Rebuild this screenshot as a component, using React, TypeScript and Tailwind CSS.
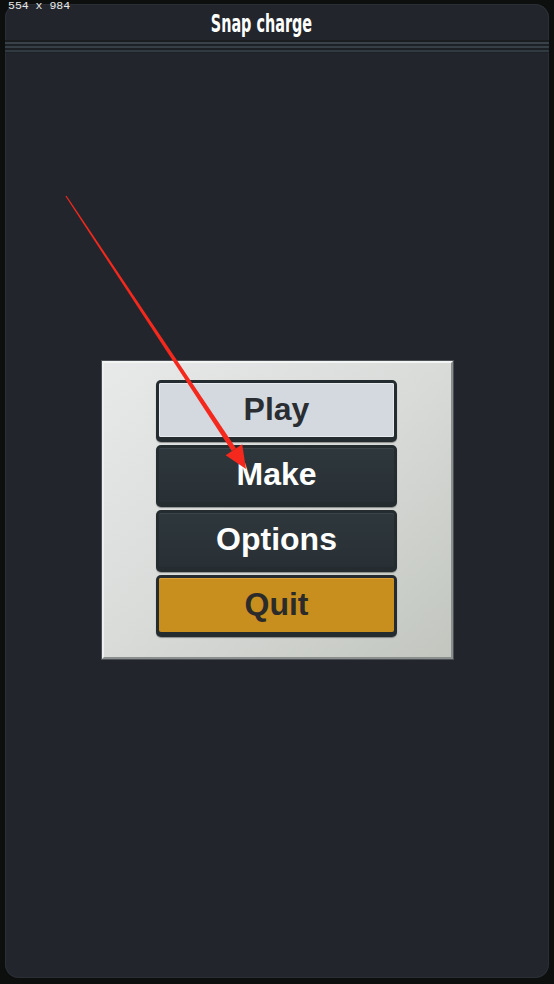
import React from "react";

function MenuButton({ label, variant }: { label: string; variant: "light" | "dark" | "gold" }) {
  const face =
    variant === "light"
      ? "bg-[#d3d9df] text-[#2a2e33] shadow-[inset_0_0_0_1px_#e6eaee]"
      : variant === "gold"
      ? "bg-[#c98f1e] text-[#2b2b2b] shadow-[inset_0_1px_0_#d9a23a]"
      : "bg-gradient-to-b from-[#2e373c] to-[#283035] text-white shadow-[inset_0_1px_0_#3a444a]";
  return (
    <div className="h-[62px] w-[241px] rounded-[5px] bg-[#252c30] px-[3px] pt-[3px] pb-[5px] shadow-[0_1px_1px_rgba(0,0,0,0.35)]">
      <div
        className={`flex h-full w-full items-center justify-center rounded-[2px] pb-[3px] text-[32px] font-bold leading-none ${face}`}
        style={{ fontFamily: '"Liberation Sans", Arial, sans-serif' }}
      >
        {label}
      </div>
    </div>
  );
}

export default function App() {
  return (
    <div className="relative h-[984px] w-[554px] overflow-hidden bg-[#0d0f0f]">
      <div className="flex h-full w-full flex-col px-[5px] pt-[4px] pb-[6px]">
        <div className="flex flex-1 flex-col overflow-hidden rounded-[14px] bg-[#22262c] shadow-[inset_0_0_0_1px_#2a2f35]">
          <div className="flex h-[36px] items-center justify-center pr-[32px] pt-[4px]">
            <span
              className="inline-block scale-x-[0.6] text-[24px] font-bold leading-none text-white"
              style={{ fontFamily: '"DejaVu Sans", sans-serif' }}
            >
              Snap charge
            </span>
          </div>
          <div className="flex h-[13px] flex-col">
            <div className="h-[2px] bg-[#1a1e21]" />
            <div className="h-[2px] bg-[#39424a]" />
            <div className="h-[2px] bg-[#1c2024]" />
            <div className="h-[2px] bg-[#363f46]" />
            <div className="h-[2px] bg-[#1c2024]" />
            <div className="h-[2px] bg-[#323a41]" />
            <div className="h-[1px] bg-[#1e2227]" />
          </div>
          <div className="flex flex-1 flex-col pl-[97px] pt-[308px]">
            <div className="flex h-[298px] w-[351px] flex-col items-center border-[2px] border-t-[#f3f4f4] border-l-[#eef0f0] border-r-[#8a8e8c] border-b-[#8a8e8c] bg-gradient-to-br from-[#e8eaea] via-[#d8dbd8] to-[#c2c6bf] pt-[17px] pr-[2px] shadow-[0_0_0_1px_#4a5054]">
              <div className="flex flex-col gap-[3px]">
                <MenuButton label="Play" variant="light" />
                <MenuButton label="Make" variant="dark" />
                <MenuButton label="Options" variant="dark" />
                <MenuButton label="Quit" variant="gold" />
              </div>
            </div>
          </div>
        </div>
      </div>

      <div
        className="absolute left-[8px] top-0 text-[11.5px] leading-[11px] text-[#e8e8e8]"
        style={{ fontFamily: '"Liberation Mono", "DejaVu Sans Mono", monospace' }}
      >
        554 x 984
      </div>

      <svg className="pointer-events-none absolute left-0 top-0" width="554" height="984" viewBox="0 0 554 984">
        <polygon points="65.5,196.3 66.5,195.7 236.0,448.3 231.8,451.1" fill="#f4281c" />
        <polygon points="246,469 225.6,455.2 242.2,444.2" fill="#f4281c" />
      </svg>
    </div>
  );
}
